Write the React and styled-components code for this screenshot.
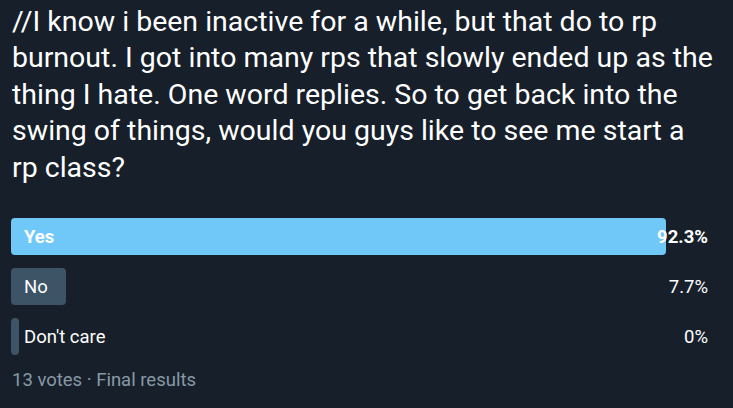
import React from 'react';
import styled, { createGlobalStyle } from 'styled-components';

const Global = createGlobalStyle`
  html, body {
    margin: 0;
    background: #17202a;
  }
  body {
    font-family: Roboto, "Liberation Sans", sans-serif;
  }
`;

const Card = styled.div`
  background: #17202a;
  color: #fff;
  padding: 4px 10px 0 11px;
  width: 733px;
  height: 408px;
  box-sizing: border-box;
`;

const Text = styled.p`
  margin: 0 0 0 1px;
  font-size: 28.5px;
  line-height: 36.4px;
  white-space: nowrap;
`;

const Poll = styled.div`
  display: flex;
  flex-direction: column;
  gap: 13px;
  margin: 32px 2px 0 0;
`;

const Row = styled.div`
  display: grid;
  height: 37px;
`;

const Bar = styled.div`
  grid-area: 1 / 1;
  min-width: 8px;
  height: 100%;
  border-radius: 4px;
  background: ${p => (p.$winner ? '#6fc8f7' : '#3d5466')};
`;

const Label = styled.div`
  grid-area: 1 / 1;
  display: flex;
  align-items: center;
  justify-content: space-between;
  padding: 0 13px 0 13px;
  font-size: 18.5px;
  font-weight: ${p => (p.$winner ? 700 : 400)};
`;

const Footer = styled.div`
  margin-top: 14px;
  margin-left: 1px;
  font-size: 18.5px;
  color: #8899a6;
`;

const lines = [
  '//I know i been inactive for a while, but that do to rp',
  'burnout. I got into many rps that slowly ended up as the',
  'thing I hate. One word replies. So to get back into the',
  'swing of things, would you guys like to see me start a',
  'rp class?',
];

const options = [
  { label: 'Yes', pct: 92.3, text: '92.3%', winner: true },
  { label: 'No', pct: 7.7, text: '7.7%' },
  { label: "Don't care", pct: 0, text: '0%' },
];

export default function App() {
  return (
    <Card>
      <Global />
      <Text>
        {lines.map((l, i) => (
          <React.Fragment key={i}>
            {l}
            {i < lines.length - 1 && <br />}
          </React.Fragment>
        ))}
      </Text>
      <Poll>
        {options.map(o => (
          <Row key={o.label}>
            <Bar $winner={o.winner} style={{ width: `${o.pct}%` }} />
            <Label $winner={o.winner}>
              <span>{o.label}</span>
              <span>{o.text}</span>
            </Label>
          </Row>
        ))}
      </Poll>
      <Footer>13 votes · Final results</Footer>
    </Card>
  );
}
